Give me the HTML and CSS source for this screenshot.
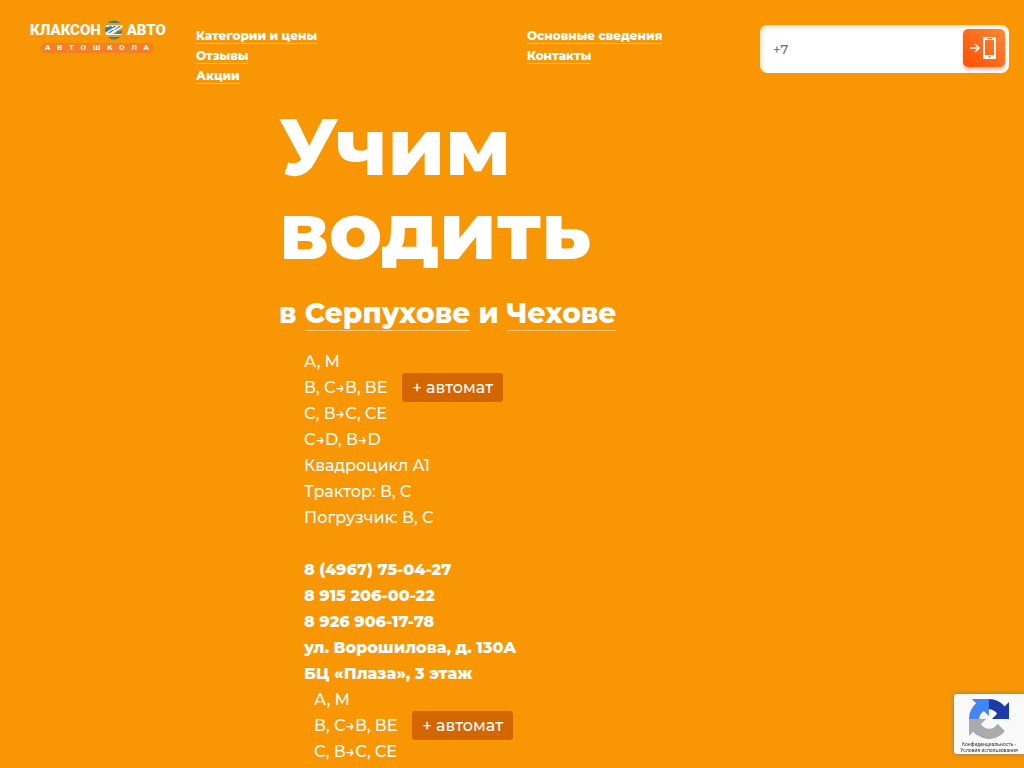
FILE: index.html
```html
<!DOCTYPE html>
<html lang="ru">
<head>
<meta charset="utf-8">
<title>Клаксон Авто — автошкола</title>
<link rel="stylesheet" href="styles.css">
</head>
<body>
<header class="header">
  <a class="logo" href="#" aria-label="Клаксон Авто">
    <span class="logo-name">КЛАКСОН<svg class="logo-mark" viewBox="0 0 20 20" aria-hidden="true"><path fill="#397f99" d="M5 2a9.500 9.500 0 0 1 10 0l1 1H4zM2 6h15l1 2-8 6H2l-1-4zM12 14l6-4v2l-1 2zM4 17h12l-1 1a9.500 9.500 0 0 1-10 0z"/><path fill="#eef3ed" d="M2 5h16l1 2-10 7h9l-1 1H2l-1-2 9-6H1z"/><path fill="#397f99" d="M3 9l3-3h2L5 9zM8 8l2-2h2l-2 2zM4 13l4-3h2l-4 3zM10 10l5-4h2l-6 4zM11 14l3-3h2l-3 3z"/></svg>АВТО</span>
    <span class="logo-sub"><span>А</span><span>В</span><span>Т</span><span>О</span><span>Ш</span><span>К</span><span>О</span><span>Л</span><span>А</span></span>
  </a>
  <nav class="nav">
    <ul class="nav-col">
      <li><a href="#">Категории и цены</a></li>
      <li><a href="#">Отзывы</a></li>
      <li><a href="#">Акции</a></li>
    </ul>
    <ul class="nav-col">
      <li><a href="#">Основные сведения</a></li>
      <li><a href="#">Контакты</a></li>
    </ul>
  </nav>
  <form class="callback">
    <input class="phone" type="tel" placeholder="+7" aria-label="Телефон">
    <button class="send" type="button" aria-label="Заказать звонок">
      <svg width="28" height="24" viewBox="0 0 28 24" aria-hidden="true"><path d="M0 12h9M5 8l4 4-4 4" fill="none" stroke="#fff" stroke-width="1.5"/><path fill="#fff" fill-rule="evenodd" d="M14 1h11a1 1 0 0 1 1 1v20a1 1 0 0 1-1 1H14a1 1 0 0 1-1-1V2a1 1 0 0 1 1-1zm1 3v15h9V4zm2-2v1h5V2zm2.500 18a1 1 0 1 0 0 2 1 1 0 0 0 0-2z"/></svg>
    </button>
  </form>
</header>
<main class="hero">
  <h1 class="title">Учим<br>водить</h1>
  <h2 class="cities">в <a href="#">Серпухове</a> и <a href="#">Чехове</a></h2>
  <section class="branch">
    <ul class="list">
      <li>А, М</li>
      <li>В, С→В, ВЕ<span class="tag">+ автомат</span></li>
      <li>С, В→С, СЕ</li>
      <li>С→D, В→D</li>
      <li>Квадроцикл А1</li>
      <li>Трактор: В, С</li>
      <li>Погрузчик: В, С</li>
    </ul>
    <address class="contacts">8 (4967) 75-04-27<br>8 915 206-00-22<br>8 926 906-17-78<br>ул. Ворошилова, д. 130А<br>БЦ «Плаза», 3 этаж</address>
  </section>
  <section class="branch branch-next">
    <ul class="list">
      <li>А, М</li>
      <li>В, С→В, ВЕ<span class="tag">+ автомат</span></li>
      <li>С, В→С, СЕ</li>
    </ul>
  </section>
</main>
<aside class="captcha">
  <svg width="40" height="40" viewBox="0 0 64 64" aria-hidden="true"><path fill="#1c3aa9" d="M64 31.955l-.033-1.370V4.687l-7.160 7.160C50.948 4.674 42.033.093 32.050.093c-10.389 0-19.622 4.960-25.458 12.640l11.736 11.860a15.550 15.550 0 0 1 4.754-5.334c2.050-1.600 4.952-2.906 8.968-2.906.485 0 .860.057 1.135.163 4.976.393 9.288 3.140 11.828 7.124l-8.307 8.307L64 31.953"/><path fill="#4285f4" d="M31.862.094l-1.370.033H4.594l7.160 7.160C4.580 13.147 0 22.060 0 32.046c0 10.388 4.960 19.622 12.640 25.458L24.500 45.768a15.550 15.550 0 0 1-5.334-4.754c-1.600-2.050-2.906-4.952-2.906-8.968 0-.485.057-.860.163-1.135.393-4.976 3.140-9.288 7.124-11.828l8.307 8.307L31.860.095"/><path fill="#ababab" d="M.001 32.045l.033 1.370v25.898l7.160-7.160c5.860 7.173 14.774 11.754 24.760 11.754 10.388 0 19.622-4.960 25.458-12.640l-11.736-11.860a15.550 15.550 0 0 1-4.754 5.334c-2.050 1.600-4.952 2.906-8.968 2.906-.485 0-.860-.057-1.135-.163-4.976-.393-9.288-3.140-11.828-7.124l8.307-8.307L.001 32.047"/></svg>
  <p class="captcha-text"><a href="#">Конфиденциальность</a> -<br><a href="#">Условия использования</a></p>
</aside>
</body>
</html>
```
FILE: styles.css
```css
* { box-sizing: border-box; }
body {
  margin: 0;
  height: 100vh;
  overflow: hidden;
  background: #f99604;
  color: #fff;
  font-family: Montserrat, Inter, sans-serif;
  font-weight: 500;
}
a { color: inherit; text-decoration: none; }
ul { margin: 0; padding: 0; list-style: none; }
.header {
  display: flex;
  align-items: flex-start;
  padding: 20px 15px 0 30px;
}
.logo { width: 136px; margin-right: 30px; }
.logo-name {
  display: flex;
  align-items: center;
  justify-content: space-between;
  height: 20px;
  font: 900 15px/20px Roboto, sans-serif;
}
.logo-mark { flex: none; width: 20px; height: 20px; }
.logo-sub {
  display: flex;
  justify-content: space-between;
  margin: 3px 12px 0 10px;
  padding: 0 5px;
  border-radius: 5px;
  background: #f38022;
  font: 700 8px/10px Roboto, sans-serif;
}
.nav {
  display: grid;
  grid-template-columns: 1fr 1fr;
  column-gap: 98px;
  flex: 1;
  padding-top: 6px;
}
.nav-col {
  font-size: 12px;
  font-weight: 800;
  line-height: 20px;
  white-space: nowrap;
}
.nav-col a { border-bottom: 1px solid #fccb81; }
.callback {
  display: flex;
  width: 249px;
  height: 48px;
  margin-top: 5px;
  padding: 4px;
  border-radius: 8px;
  background: #fff;
  box-shadow: inset 2px 2px 4px #fde3c3;
}
.phone {
  flex: 1;
  min-width: 0;
  padding: 0 9px;
  border: 0;
  background: transparent;
  font: inherit;
  font-size: 13px;
}
.phone::placeholder { color: #6c757d; opacity: 1; }
.send {
  display: flex;
  align-items: center;
  justify-content: center;
  width: 42px;
  height: 38px;
  padding: 0;
  border: 0;
  border-radius: 5px;
  background: linear-gradient(45deg, #ff5000, #ff8838);
  box-shadow: 0 3px 3px #f4bdb0;
}
.hero { padding: 19px 0 0 279px; }
.title {
  margin: 0;
  font-size: 80px;
  font-weight: 800;
  line-height: 84px;
}
.cities {
  margin: 22px 0 18px;
  font-size: 28px;
  font-weight: 800;
  line-height: 36px;
}
.cities a { display: inline-block; line-height: 34px; border-bottom: 1px solid #fccb81; }
.branch {
  padding-left: 25px;
  font-size: 16px;
  line-height: 26px;
}
.branch-next { padding-left: 35px; }
.tag {
  display: inline-block;
  margin: -2px 0 -2px 15px;
  padding: 0 10px;
  border-radius: 3px;
  background: #d46600;
  line-height: 29px;
}
.list li { height: 26px; }
.contacts {
  font-style: normal;
  font-weight: 800;
}
.list + .contacts { margin-top: 26px; }
.captcha {
  position: fixed;
  right: 0;
  bottom: 14px;
  width: 70px;
  height: 60px;
  padding-top: 5px;
  border-radius: 3px 0 0 3px;
  background: #f9f9f9;
  box-shadow: 0 0 5px #808080;
  text-align: center;
}
.captcha svg { display: block; margin: 0 auto; }
.captcha-text {
  margin: 2px 0 0;
  color: #333;
  font: 400 5px/6px Roboto, sans-serif;
  white-space: nowrap;
}
```
